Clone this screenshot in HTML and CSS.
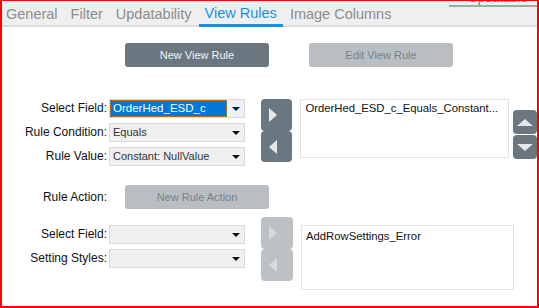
FILE: index.html
```html
<!DOCTYPE html>
<html lang="en">
<head>
    <meta charset="UTF-8">
    <title>View Rules</title>
    <link rel="stylesheet" href="styles.css">
</head>
<body>
    <div class="frame">
        <div class="behind">Updatable</div>

        <div class="tabs">
            <div class="tab">General</div>
            <div class="tab">Filter</div>
            <div class="tab">Updatability</div>
            <div class="tab active">View Rules</div>
            <div class="tab">Image Columns</div>
        </div>

        <div class="content">
            <div class="top-buttons">
                <button class="btn">New View Rule</button>
                <button class="btn disabled">Edit View Rule</button>
            </div>

            <div class="rule-block">
                <div class="fields">
                    <label>Select Field:</label>
                    <div class="select focused"><span class="value">OrderHed_ESD_c</span><span class="caret"></span></div>
                    <label>Rule Condition:</label>
                    <div class="select"><span class="value">Equals</span><span class="caret"></span></div>
                    <label>Rule Value:</label>
                    <div class="select"><span class="value">Constant: NullValue</span><span class="caret"></span></div>
                </div>
                <div class="mover">
                    <div class="move-btn first"><span class="tri-right"></span></div>
                    <div class="move-btn"><span class="tri-left"></span></div>
                </div>
                <div class="listbox">OrderHed_ESD_c_Equals_Constant...</div>
                <div class="updown">
                    <div class="ud-btn"><span class="tri-up"></span></div>
                    <div class="ud-btn"><span class="tri-down"></span></div>
                </div>
            </div>

            <div class="action-row">
                <label>Rule Action:</label>
                <button class="btn disabled">New Rule Action</button>
            </div>

            <div class="action-block">
                <div class="fields">
                    <label>Select Field:</label>
                    <div class="select"><span class="value"></span><span class="caret"></span></div>
                    <label>Setting Styles:</label>
                    <div class="select"><span class="value"></span><span class="caret"></span></div>
                </div>
                <div class="mover off">
                    <div class="move-btn first"><span class="tri-right"></span></div>
                    <div class="move-btn"><span class="tri-left"></span></div>
                </div>
                <div class="listbox tall">AddRowSettings_Error</div>
            </div>
        </div>
    </div>
</body>
</html>
```

FILE: styles.css
```css
/* Base */
body {
    margin: 0;
    font-family: 'Liberation Sans', Arial, sans-serif;
    background: #fff;
}

.frame {
    position: relative;
    width: 539px;
    height: 308px;
    box-sizing: border-box;
    border: 2px solid #ff0000;
    border-top-width: 1px;
    overflow: hidden;
}

/* strip of the panel behind, peeking at the top right */
.behind {
    position: absolute;
    top: -10px;
    right: -4px;
    width: 86px;
    padding-left: 6px;
    font-size: 13px;
    line-height: 14px;
    color: #777;
    text-align: center;
    border-bottom: 2px solid #a6a6a6;
    z-index: 2;
}

/* Tabs */
.tabs {
    display: flex;
    gap: 1px;
    height: 24px;
    background: #efefef;
    border-bottom: 2px solid #dedede;
}

.tab {
    padding: 2px 6px 0;
    font-size: 14.5px;
    line-height: 22px;
    color: #8c8c8c;
}

.tab:first-child {
    margin-left: -2px;
}

.tab.active {
    color: #1a8fe3;
    border-bottom: 3px solid #1a8fe3;
    margin-bottom: -2px;
    line-height: 21px;
}

/* Buttons */
.btn {
    width: 144px;
    height: 24px;
    border: none;
    border-radius: 3px;
    background: #6b7780;
    color: #f2f2f2;
    font-family: 'Liberation Sans', Arial, sans-serif;
    font-size: 11px;
    padding: 0;
}

.btn.disabled {
    background: #b9bec3;
    color: #7a8288;
}

.top-buttons {
    display: flex;
    gap: 40px;
    margin-top: 16px;
    padding-left: 123px;
}

/* Form blocks */
.rule-block,
.action-block {
    display: flex;
    align-items: flex-start;
}

.rule-block {
    margin-top: 32px;
}

.action-block {
    margin-top: 8px;
}

.fields {
    display: grid;
    grid-template-columns: 105px 136px;
    column-gap: 2px;
    row-gap: 5px;
}

.action-block .fields {
    margin-top: 8px;
}

label {
    font-size: 12px;
    line-height: 19px;
    color: #111;
    text-align: right;
}

.select {
    display: flex;
    height: 19px;
    box-sizing: border-box;
    border: 1px solid #dadada;
    background: #f0f0f0;
}

.select .value {
    flex: 1;
    padding-left: 3px;
    font-size: 11px;
    line-height: 17px;
    color: #333;
    white-space: nowrap;
}

.select.focused .value {
    background: #0078d7;
    color: #fff;
    outline: 1px dotted #c9862e;
    outline-offset: -1px;
    font-size: 11.5px;
}

.caret {
    width: 17px;
    display: flex;
    align-items: center;
    justify-content: center;
}

.caret::after {
    content: "";
    border-left: 4px solid transparent;
    border-right: 4px solid transparent;
    border-top: 4px solid #111;
}

/* Move left / right */
.mover {
    margin-left: 16px;
    width: 32px;
}

.move-btn {
    height: 32px;
    background: #6b7780;
    border-radius: 4px;
    display: flex;
    align-items: center;
    padding-left: 8px;
}

.move-btn + .move-btn {
    height: 31px;
}

.mover.off .move-btn {
    background: #bcc1c5;
    height: 32px;
}

.tri-right {
    border-top: 7px solid transparent;
    border-bottom: 7px solid transparent;
    border-left: 8px solid #e8e8e8;
}

.tri-left {
    border-top: 7px solid transparent;
    border-bottom: 7px solid transparent;
    border-right: 8px solid #e8e8e8;
}

.mover.off .tri-right {
    border-left-color: #d7dadd;
}

.mover.off .tri-left {
    border-right-color: #d7dadd;
}

/* List boxes */
.listbox {
    margin-left: 8px;
    width: 213px;
    height: 59px;
    box-sizing: border-box;
    border: 1px solid #e2e2e2;
    padding: 1px 4px;
    font-size: 11.3px;
    line-height: 15px;
    color: #111;
    white-space: nowrap;
}

.listbox.tall {
    margin-top: 8px;
    height: 65px;
    padding-top: 3px;
}

/* Up / down */
.updown {
    margin-left: 4px;
    margin-top: 11px;
    width: 24px;
}

.ud-btn {
    height: 24px;
    background: #6b7780;
    border-radius: 4px;
    display: flex;
    align-items: center;
    padding-left: 4px;
}

.ud-btn + .ud-btn {
    margin-top: 1px;
}

.tri-up {
    border-left: 8px solid transparent;
    border-right: 8px solid transparent;
    border-bottom: 7px solid #e8e8e8;
}

.tri-down {
    border-left: 8px solid transparent;
    border-right: 8px solid transparent;
    border-top: 7px solid #e8e8e8;
}

/* Rule action row */
.action-row {
    display: flex;
    align-items: center;
    margin-top: 19px;
}

.action-row label {
    width: 105px;
    margin-right: 18px;
}
```
